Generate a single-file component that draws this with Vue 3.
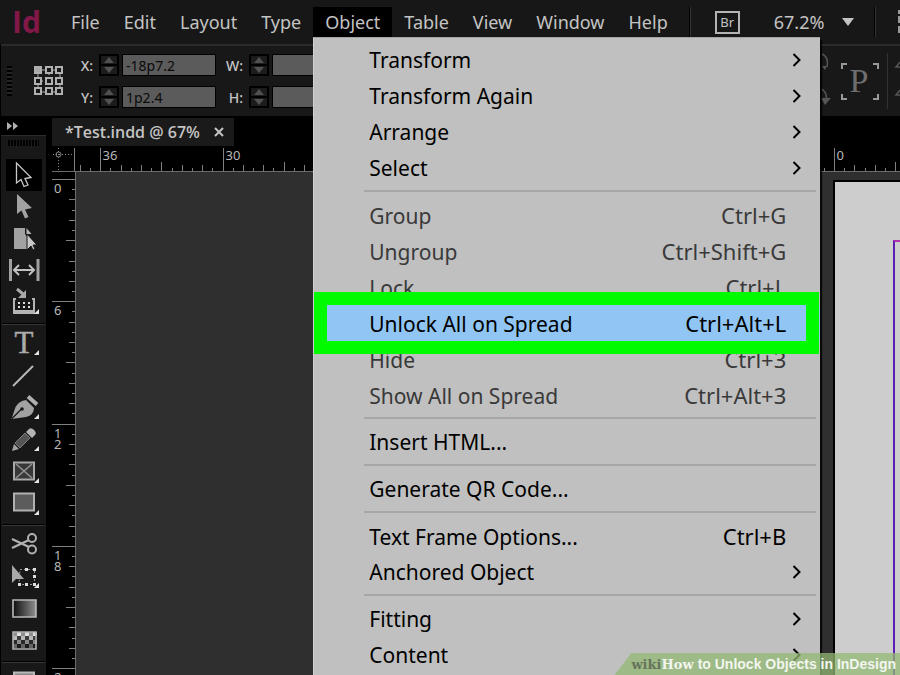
<script setup>
import { ref } from 'vue'

const menusBefore = ['File', 'Edit', 'Layout', 'Type']
const menusAfter = ['Table', 'View', 'Window', 'Help']

const groups = [
  [
    { label: 'Transform', sub: true },
    { label: 'Transform Again', sub: true },
    { label: 'Arrange', sub: true },
    { label: 'Select', sub: true },
  ],
  [
    { label: 'Group', keys: 'Ctrl+G', off: true },
    { label: 'Ungroup', keys: 'Ctrl+Shift+G', off: true },
    { label: 'Lock', keys: 'Ctrl+L', off: true },
    { label: 'Unlock All on Spread', keys: 'Ctrl+Alt+L', active: true },
    { label: 'Hide', keys: 'Ctrl+3', off: true },
    { label: 'Show All on Spread', keys: 'Ctrl+Alt+3', off: true },
  ],
  [{ label: 'Insert HTML...' }],
  [{ label: 'Generate QR Code...' }],
  [
    { label: 'Text Frame Options...', keys: 'Ctrl+B' },
    { label: 'Anchored Object', sub: true },
  ],
  [
    { label: 'Fitting', sub: true },
    { label: 'Content', sub: true },
  ],
]

const flag = '<path d="M33 22v5h-5z" fill="#e4e4e4"/>'

const checker = []
for (let r = 0; r < 4; r++) {
  for (let c = 0; c < 6; c++) {
    const shade = (r + c) % 2 ? ['#e0e0e0', '#b8b8b8', '#8a8a8a', '#666'][r] : ['#8c8c8c', '#3c3c3c', '#2a2a2a', '#1c1c1c'][r]
    checker.push(`<rect x="${7 + c * 4}" y="${7 + r * 4}" width="4" height="4" fill="${shade}"/>`)
  }
}

const toolGroups = [
  [
    { name: 'Selection', on: true, art: '<path d="M10.500 4v20l4.500-3.500 3 7 4-1.500-3-6.500 6-1z" fill="#000" stroke="#c8c8c8" stroke-width="1.300"/>' },
    { name: 'Direct Selection', art: '<path d="M11 3v20l4.500-3.500 3.500 8 3.500-1.500-3.500-7.500 7-1.500z" fill="#a2a2a2"/>' },
    { name: 'Page', art: '<path d="M8 5h11v6l3 4v11H8z" fill="#a2a2a2"/><path d="M20.500 5l5 6h-5z" fill="#b4b4b4"/><path d="M21 11v16l4-4 2 4 2-1-2-4h4z" fill="#c8c8c8" stroke="#181818" stroke-width="1"/>' },
    { name: 'Gap', art: '<path d="M4.500 4v22M32 4v22" stroke="#a0a0a0" stroke-width="3"/><path d="M8 15h20M13 10l-5 5 5 5M23 10l5 5-5 5" fill="none" stroke="#c0c0c0" stroke-width="2"/>' },
    { name: 'Content Collector', art: '<path d="M10 12H8v13h20V12h-2" fill="none" stroke="#b4b4b4" stroke-width="2"/><path d="M7 23h22v4H7z" fill="#b4b4b4"/><path d="M11 2l6 5" stroke="#a8a8a8" stroke-width="3"/><path d="M20 3v8h-8z" fill="#a8a8a8"/><path d="M12 15h2v2h-2zM17 15h2v2h-2zM22 15h2v2h-2zM12 19h2v2h-2zM17 19h2v2h-2zM22 19h2v2h-2z" fill="#ddd"/>' + flag },
  ],
  [
    { name: 'Type', art: '<text x="18" y="25" text-anchor="middle" font-family="Liberation Serif, serif" font-size="31" fill="#aaa" stroke="#aaa" stroke-width="0.500">T</text>' + flag },
    { name: 'Line', art: '<path d="M7 26L27 6" stroke="#b8b8b8" stroke-width="2"/>' },
    { name: 'Pen', art: '<path d="M5.500 27l4-12Q13 9 20 8l8 8q0 7-8 9z" fill="#a2a2a2"/><path d="M6 26.500l9-9" stroke="#181818" stroke-width="1.300"/><circle cx="16" cy="17" r="1.800" fill="#181818"/><path d="M22 4.500l9 8" stroke="#b0b0b0" stroke-width="4"/>' + flag },
    { name: 'Pencil', art: '<path d="M6 27l2-7 5 5z" fill="#a2a2a2"/><path d="M9 19L19 9l5 5-10 10z" fill="#555" stroke="#7c7c7c"/><path d="M20 8l3-3q2-2 5 1t1 5l-3 3z" fill="#b4b4b4"/>' + flag },
    { name: 'Rectangle Frame', art: '<path d="M8 6.500h20v17H8z" fill="#383838" stroke="#a8a8a8" stroke-width="2"/><path d="M10 8l16 14M26 8L10 22" stroke="#929292" stroke-width="1.600"/>' + flag },
    { name: 'Rectangle', art: '<path d="M8 5.500h20v17H8z" fill="#5c5c5c" stroke="#b0b0b0" stroke-width="2"/>' + flag },
  ],
  [
    { name: 'Scissors', art: '<path d="M6 10l17 8M6 19l17-8" stroke="#b0b0b0" stroke-width="2.400"/><ellipse cx="26" cy="9" rx="4" ry="4" fill="none" stroke="#b0b0b0" stroke-width="2"/><ellipse cx="26" cy="20.500" rx="4" ry="4" fill="none" stroke="#b0b0b0" stroke-width="2"/>' },
    { name: 'Free Transform', art: '<path d="M14 8.500h14.500v15H13z" fill="none" stroke="#989898" stroke-dasharray="2 2"/><path d="M19 7h3v3h-3zM27 7h3v3h-3zM27 14h3v3h-3zM27 22h3v3h-3zM19 22h3v3h-3zM12 22h3v3h-3z" fill="#ddd"/><path d="M6 4v18l4-4h8z" fill="#a8a8a8"/>' + flag },
    { name: 'Gradient Swatch', art: '<defs><linearGradient id="gs"><stop offset="0" stop-color="#0c0c0c"/><stop offset="1" stop-color="#909090"/></linearGradient></defs><path d="M7 7h23v17H7z" fill="url(#gs)" stroke="#b8b8b8" stroke-width="1.600"/>' },
    { name: 'Gradient Feather', art: checker.join('') + '<path d="M7 7h23v17H7z" fill="none" stroke="#b0b0b0" stroke-width="1.600"/>' },
  ],
  [{ name: 'Note', art: '<path d="M8 6.500h20v16H8z" fill="#888" stroke="#b8b8b8" stroke-width="2"/>' }],
]

/* Ruler ticks: twelve per labelled division of six picas. */
const division = 122.3
function ticks(origin, from, to) {
  const list = []
  for (let i = from; i <= to; i++) {
    const kind = i % 12 === 0 ? 24 : i % 6 === 0 ? 10 : i % 2 === 0 ? 7 : 4
    list.push({ at: Math.round(origin + (i * division) / 12) + 0.5, size: kind, major: i % 12 === 0, value: Math.abs((i / 12) * 6) })
  }
  return list
}
const across = ticks(782, -74, 11)
const down = ticks(7, 0, 59)

const x = ref('-18p7.2')
const y = ref('1p2.4')
const w = ref('')
const h = ref('')
const zoom = ref('67.2%')
</script>

<template>
  <div class="app">
    <header class="menubar">
      <span class="logo">Id</span>
      <nav class="menus">
        <button v-for="m in menusBefore" :key="m" class="menu-button">{{ m }}</button>
        <div class="open-menu">
          <button class="menu-button open" aria-expanded="true">Object</button>
          <div class="dropdown" role="menu">
            <div v-for="(g, gi) in groups" :key="gi" class="group">
              <button
                v-for="item in g"
                :key="item.label"
                class="item"
                :class="{ off: item.off, active: item.active }"
                role="menuitem"
              >
                <span class="label">{{ item.label }}</span>
                <span v-if="item.keys" class="keys">{{ item.keys }}</span>
                <svg v-if="item.sub" class="chevron" viewBox="0 0 10 14" aria-hidden="true">
                  <path d="M1.500 1l6 6-6 6" />
                </svg>
              </button>
            </div>
          </div>
        </div>
        <button v-for="m in menusAfter" :key="m" class="menu-button">{{ m }}</button>
      </nav>
      <span class="divider"></span>
      <button class="bridge">Br</button>
      <label class="zoom">
        <select v-model="zoom" aria-label="Zoom level">
          <option>67.2%</option>
        </select>
        <svg viewBox="0 0 12 8" aria-hidden="true"><path d="M0 0h12L6 8z" /></svg>
      </label>
      <span class="divider"></span>
      <svg class="view-icon" viewBox="0 0 20 24" aria-hidden="true">
        <path d="M0 0h20v4H0zM0 6h20v7H0zM0 16h20v7H0z" />
      </svg>
    </header>

    <section class="control">
      <span class="grip-v"></span>
      <svg class="origin" viewBox="0 0 30 30" aria-hidden="true">
        <path d="M4 4h22v22H4zM15 4v5M15 21v5M4 15h5M21 15h5" />
        <g>
          <rect x="1" y="1" width="6" height="6" class="solid" />
          <rect x="12" y="1" width="6" height="6" /><rect x="22" y="1" width="6" height="6" />
          <rect x="1" y="12" width="6" height="6" /><rect x="12" y="12" width="6" height="6" /><rect x="22" y="12" width="6" height="6" />
          <rect x="1" y="22" width="6" height="6" /><rect x="12" y="22" width="6" height="6" /><rect x="22" y="22" width="6" height="6" />
        </g>
      </svg>
      <div class="fields">
        <label for="fx">X:</label>
        <svg class="stepper" viewBox="0 0 20 22" aria-hidden="true"><path d="M10 3l5 6H5zM10 19l5-6H5z" /><path class="cut" d="M0 11h20" /></svg>
        <input id="fx" v-model="x" />
        <label for="fw">W:</label>
        <svg class="stepper" viewBox="0 0 20 22" aria-hidden="true"><path d="M10 3l5 6H5zM10 19l5-6H5z" /><path class="cut" d="M0 11h20" /></svg>
        <input id="fw" v-model="w" />
        <label for="fy">Y:</label>
        <svg class="stepper" viewBox="0 0 20 22" aria-hidden="true"><path d="M10 3l5 6H5zM10 19l5-6H5z" /><path class="cut" d="M0 11h20" /></svg>
        <input id="fy" v-model="y" />
        <label for="fh">H:</label>
        <svg class="stepper" viewBox="0 0 20 22" aria-hidden="true"><path d="M10 3l5 6H5zM10 19l5-6H5z" /><path class="cut" d="M0 11h20" /></svg>
        <input id="fh" v-model="h" />
      </div>
      <svg class="flip" viewBox="0 0 80 56" aria-hidden="true">
        <g class="arc">
          <path d="M2 1q7 3 5 13M2 36q6 5 4 12M80 14h-4l4-5M80 42h-4l4-5" />
        </g>
        <path class="tip" d="M1 45h10l-6 7zM2 13h5l-2 4z" />
        <path class="corners" d="M22 16v-5h5M53 11h5v5M22 41v5h5M53 46h5v-5" />
        <text x="39" y="39" text-anchor="middle">P</text>
        <path class="line" d="M67.500 0v56" />
      </svg>
    </section>

    <main class="workspace">
      <aside class="side">
        <button class="expand" aria-label="Expand panel">
          <svg viewBox="0 0 12 8"><path d="M0 0l5 4-5 4zM6 0l5 4-5 4z" /></svg>
        </button>
        <div class="tools">
          <span class="grip-h"></span>
          <div v-for="(g, gi) in toolGroups" :key="gi" class="tool-group">
            <button v-for="t in g" :key="t.name" class="tool" :class="{ on: t.on }" :aria-label="t.name">
              <svg viewBox="0 0 36 32" v-html="t.art"></svg>
            </button>
          </div>
        </div>
      </aside>

      <section class="document">
        <div class="tabs">
          <div class="tab">
            <span>*Test.indd @ 67%</span>
            <button class="close" aria-label="Close document">
              <svg viewBox="0 0 10 10"><path d="M1 1l8 8M9 1l-8 8" /></svg>
            </button>
          </div>
        </div>
        <div class="ruler-x">
          <svg width="1600" height="26" aria-hidden="true">
            <path class="dots" d="M1 8.500h20M6.500 2v22" />
            <circle class="ring" cx="6.500" cy="8.500" r="2.500" />
            <path class="tick" d="M22.500 2v24" />
            <g v-for="t in across" :key="t.at">
              <path v-if="t.at > 24" class="tick" :d="`M${t.at} 26v-${t.size}`" />
              <text v-if="t.major" :x="t.at + 2" y="14">{{ t.value }}</text>
            </g>
          </svg>
        </div>
        <div class="stage">
          <div class="ruler-y">
            <svg width="24" height="620" aria-hidden="true">
              <g v-for="t in down" :key="t.at">
                <path class="tick" :d="`M24 ${t.at}h-${t.size}`" />
                <text v-if="t.major" :y="t.at + 2">
                  <tspan v-for="(d, i) in String(t.value)" :key="i" x="2" dy="11">{{ d }}</tspan>
                </text>
              </g>
            </svg>
          </div>
          <div class="pasteboard">
            <div class="page"><div class="margins"></div></div>
          </div>
        </div>
      </section>
    </main>

    <footer class="caption">
      <span class="wiki">wiki</span><span class="how">How</span>
      <span class="title">to Unlock Objects in InDesign</span>
    </footer>
  </div>
</template>

<style>
body {
  margin: 0;
  background: #000;
}
</style>

<style scoped>
.app {
  position: relative;
  display: flex;
  flex-direction: column;
  height: 100vh;
  overflow: hidden;
  background: #000;
  color: #c4c4c4;
  font-family: "Noto Sans", "Open Sans", sans-serif;
}
button {
  border: 0;
  padding: 0;
  background: none;
  color: inherit;
  font: inherit;
}
.menubar {
  display: flex;
  align-items: center;
  flex: none;
  height: 44px;
  background: #171717;
  font-size: 18px;
  white-space: nowrap;
}
.logo {
  width: 46px;
  padding-left: 12px;
  box-sizing: border-box;
  color: #821848;
  font-family: "Open Sans", "Noto Sans", sans-serif;
  font-size: 30px;
  font-weight: 700;
  line-height: 40px;
}
.menus {
  display: flex;
  padding-left: 18px;
}
.menu-button {
  height: 30px;
  padding: 0 12px;
  line-height: 30px;
}
.open {
  background: #000;
}
.open-menu {
  position: relative;
}
.dropdown {
  position: absolute;
  z-index: 5;
  top: 100%;
  left: 0;
  width: 507px;
  padding: 4px 0;
  box-sizing: border-box;
  border-left: 1px solid #d0d0d0;
  border-top: 1px solid #a4a4a4;
  background: #c0c0c0;
  box-shadow: 2px 3px 1px rgba(0, 0, 0, 0.8);
  color: #000;
  font-size: 21px;
}
.group + .group::before {
  content: "";
  display: block;
  height: 2px;
  margin: 4px 4px 5px 50px;
  background: #a6a6a6;
}
.item {
  position: relative;
  display: flex;
  align-items: baseline;
  width: 100%;
  height: 36px;
  padding: 0 34px 0 55px;
  line-height: 36px;
  text-align: left;
}
.label {
  flex: 1;
}
.keys {
  font-size: 22px;
}
.off {
  color: #393939;
}
.active {
  z-index: 1;
  background: #91c6f4;
}
.active::after {
  content: "";
  position: absolute;
  inset: -13px 1px -13px 0;
  border: 13px solid #00fb00;
}
.chevron {
  align-self: center;
  width: 10px;
  height: 14px;
  margin-right: -16px;
  fill: none;
  stroke: #000;
  stroke-width: 2;
}
.divider {
  flex: none;
  width: 1px;
  height: 30px;
  margin: 0 24px 0 9px;
  border-left: 1px solid #000;
  background: #333;
}
.zoom + .divider {
  margin: 0 22px 0 20px;
}
.bridge {
  flex: none;
  width: 25px;
  height: 23px;
  border: 2px solid #b4b4b4;
  font-size: 13px;
  line-height: 18px;
}
.zoom {
  display: flex;
  align-items: center;
  gap: 10px;
  padding-left: 34px;
}
.zoom select {
  width: 58px;
  padding: 0;
  border: 0;
  appearance: none;
  background: none;
  color: inherit;
  font: inherit;
}
.zoom svg {
  width: 12px;
  height: 8px;
  fill: #c4c4c4;
}
.view-icon {
  flex: none;
  width: 20px;
  height: 24px;
  fill: #999;
}
.control {
  display: flex;
  align-items: center;
  flex: none;
  height: 70px;
  margin-left: 1px;
  border-top: 2px solid #2a2a2a;
  background: #181818;
  overflow: hidden;
}
.grip-v {
  flex: none;
  width: 5px;
  height: 30px;
  margin-left: 6px;
  background: repeating-linear-gradient(#000 0 2px, #242424 2px 4px);
}
.origin {
  flex: none;
  width: 30px;
  height: 30px;
  margin-left: 22px;
  fill: #181818;
  stroke: #b0b0b0;
  stroke-width: 1;
}
.origin rect {
  stroke-width: 2;
}
.origin .solid {
  fill: #a8a8a8;
}
.fields {
  display: grid;
  grid-template-columns: 32px 20px 94px 27px 20px 94px;
  gap: 10px 3px;
  align-items: center;
  font-size: 14px;
}
.fields label {
  text-align: right;
  padding-right: 3px;
  font-weight: 500;
}
.stepper {
  width: 20px;
  height: 22px;
  border-radius: 1px;
  background: #1c1c1c;
  box-shadow: inset 0 0 0 2px #000;
  fill: #505050;
}
.cut {
  stroke: #000;
  stroke-width: 2;
}
.fields input {
  width: 100%;
  height: 22px;
  padding: 0 3px;
  box-sizing: border-box;
  border: 1px solid #000;
  background: #5b5b5b;
  color: #0a0a0a;
  font-family: inherit;
  font-size: 14px;
}
.flip {
  flex: none;
  width: 80px;
  height: 56px;
  margin-left: auto;
  fill: none;
}
.arc {
  stroke: #555;
  stroke-width: 1.5;
}
.tip {
  fill: #555;
}
.corners {
  stroke: #999;
  stroke-width: 2;
}
.line {
  stroke: #333;
}
.flip text {
  fill: #6e6e6e;
  font-family: "Liberation Serif", serif;
  font-size: 34px;
}
.workspace {
  display: flex;
  flex: 1;
  min-height: 0;
}
.side {
  display: flex;
  flex-direction: column;
  flex: none;
  width: 45px;
  padding: 1px 0 0 1px;
  box-sizing: content-box;
}
.expand {
  display: flex;
  align-items: center;
  flex: none;
  height: 18px;
  padding-left: 6px;
}
.expand svg {
  width: 12px;
  height: 8px;
  fill: #b0b0b0;
}
.tools {
  flex: 1;
  padding: 4px 0 0;
  border-top: 1px solid #2c2c2c;
  background: #181818;
  overflow: hidden;
}
.grip-h {
  display: block;
  height: 6px;
  margin: 0 7px 13px;
  background: repeating-linear-gradient(90deg, #000 0 2px, #1c1c1c 2px 3px);
}
.tool-group + .tool-group::before {
  content: "";
  display: block;
  height: 1px;
  margin: 4px 1px 3px;
  border-top: 1px solid #000;
  background: #363636;
}
.tool {
  display: block;
  width: 36px;
  height: 32px;
  margin-left: 5px;
}
.tool.on {
  background: #000;
}
.tool svg {
  display: block;
  width: 36px;
  height: 32px;
  overflow: visible;
}
.document {
  display: flex;
  flex-direction: column;
  flex: 1;
  min-width: 0;
  margin-left: 6px;
}
.tabs {
  display: flex;
  flex: none;
  height: 28px;
  padding-top: 2px;
}
.tab {
  display: flex;
  align-items: center;
  gap: 14px;
  padding: 0 10px 0 13px;
  background: #1a1a1a;
  font-family: "Open Sans", "Noto Sans", sans-serif;
  font-size: 16px;
  font-weight: 600;
}
.close {
  display: flex;
}
.close svg {
  width: 10px;
  height: 10px;
  stroke: #c4c4c4;
  stroke-width: 2;
}
.ruler-x {
  flex: none;
  height: 25px;
  border-bottom: 1px solid #6c6c6c;
  overflow: hidden;
}
.ruler-x svg,
.ruler-y svg {
  display: block;
  fill: #b8b8b8;
  font-size: 13px;
}
.tick {
  stroke: #808080;
}
.dots {
  stroke: #888;
  stroke-dasharray: 1 2;
}
.ring {
  fill: none;
  stroke: #888;
}
.stage {
  display: flex;
  flex: 1;
  min-height: 0;
}
.ruler-y {
  flex: none;
  width: 23px;
  border-right: 1px solid #6c6c6c;
  overflow: hidden;
}
.pasteboard {
  flex: 1;
  display: flex;
  justify-content: flex-end;
  padding-top: 8px;
  background: #2f2f2f;
}
.page {
  width: 65px;
  padding-top: 58px;
  border-left: 2px solid #000;
  border-top: 2px solid #000;
  background: #cdcdcd;
}
.margins {
  height: 100%;
  margin-left: 58px;
  border-left: 2px solid #5a1cb4;
  border-top: 2px solid #b030b0;
}
.caption {
  position: absolute;
  z-index: 9;
  right: 0;
  bottom: 0;
  display: flex;
  align-items: center;
  height: 22px;
  padding: 0 4px 0 17px;
  background: rgba(147, 184, 116, 0.75);
  clip-path: polygon(17px 0, 100% 0, 100% 100%, 0 100%);
  color: #f2f6ee;
  font-family: "Liberation Sans", sans-serif;
  font-size: 14px;
  font-weight: bold;
  white-space: nowrap;
}
.wiki,
.how {
  font-family: "DejaVu Serif", serif;
  font-size: 13px;
}
.wiki {
  color: #66745a;
}
.title {
  padding-left: 4px;
}
</style>
